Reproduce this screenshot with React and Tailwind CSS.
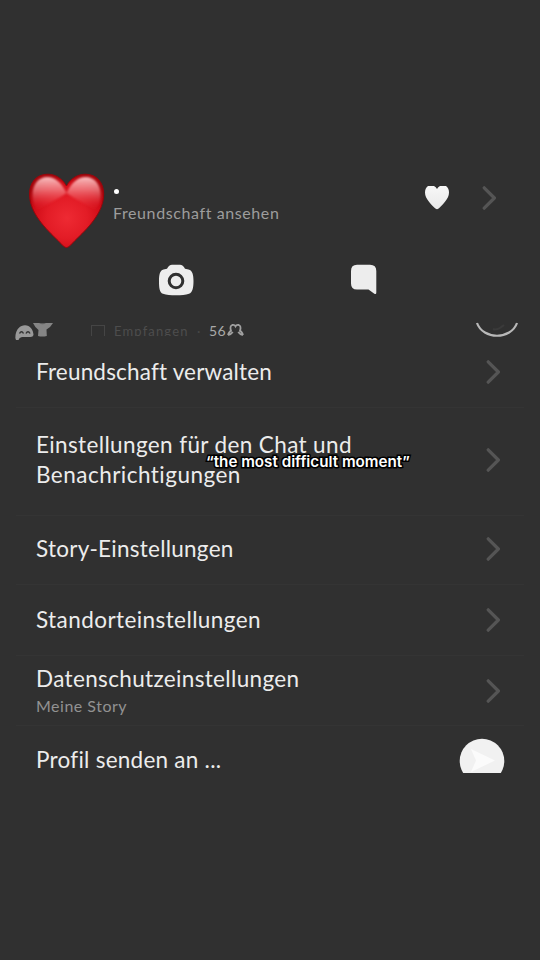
import React from 'react';

function Chevron({ className = '' }) {
  return (
    <svg className={`shrink-0 ${className}`} width="16" height="24" viewBox="0 0 16 24" fill="none" stroke="#555" strokeWidth="3.2">
      <path d="M2.2 1.8 L12.4 12 L2.2 22.2" strokeLinejoin="round" strokeLinecap="round" />
    </svg>
  );
}

function RedHeart() {
  return (
    <svg className="shrink-0" width="80" height="78" viewBox="0 0 80 78">
      <defs>
        <radialGradient id="body" cx="40" cy="46" r="45" gradientUnits="userSpaceOnUse">
          <stop offset="0" stopColor="#ee2a33" />
          <stop offset="0.45" stopColor="#e31c26" />
          <stop offset="0.78" stopColor="#cf0b16" />
          <stop offset="1" stopColor="#a6040b" />
        </radialGradient>
        <linearGradient id="gloss" x1="0" y1="5" x2="0" y2="38" gradientUnits="userSpaceOnUse">
          <stop offset="0" stopColor="#ffc9ca" stopOpacity="0.95" />
          <stop offset="0.4" stopColor="#f5878b" stopOpacity="0.75" />
          <stop offset="1" stopColor="#ec2c35" stopOpacity="0" />
        </linearGradient>
        <filter id="soft" x="-10%" y="-10%" width="120%" height="120%">
          <feGaussianBlur stdDeviation="0.9" />
        </filter>
      </defs>
      <path
        d="M39.5 14 C35 6 28 2.2 20.5 2.2 C9.500 2.200 2.500 10.500 2.500 22 C2.500 41 19 57 31 68.500 C34 71.500 37 75.500 39.500 75.500 C42 75.500 45 71.500 48 68.500 C60 57 76.700 41 76.700 22 C76.700 10.500 69.500 2.200 58.500 2.200 C51 2.200 44 6 39.500 14 Z"
        fill="url(#body)"
        stroke="#98060b"
        strokeWidth="1"
      />
      <g fill="url(#gloss)" filter="url(#soft)">
        <path d="M39.500 21 C34 10 28 5 20.500 5 C11 5 5.500 13 5.500 23 C5.500 29 7.500 35 11 39 C20 31 30 28 39.500 21 Z" />
        <path d="M39.500 21 C45 10 51 5 58.500 5 C68 5 73.700 13 73.700 23 C73.700 29 71.500 35 68 39 C59 31 49 28 39.500 21 Z" />
      </g>
    </svg>
  );
}

function WhiteHeart() {
  return (
    <svg className="shrink-0" width="26" height="26" viewBox="0 0 26 26">
      <defs>
        <linearGradient id="wh" x1="0" y1="0" x2="0" y2="1">
          <stop offset="0" stopColor="#f7f7f7" />
          <stop offset="1" stopColor="#e9e9e9" />
        </linearGradient>
      </defs>
      <path d="M4 1 H10 Q12 1.800 13 4 Q14 1.800 16 1 H22 Q25 3 25 7.500 C25 14 18.500 19.500 15.500 22.800 Q13 25.500 10.500 22.800 C7.500 19.500 1 14 1 7.500 Q1 3 4 1 Z" fill="url(#wh)" />
    </svg>
  );
}

function Header() {
  return (
    <header className="flex h-[84px] items-start pl-[27px]">
      <div className="pt-[4px]"><RedHeart /></div>
      <div className="ml-[6px] mt-[21px] w-[311px]">
        <div className="flex h-[12px] items-start pl-[1px]">
          <span className="size-[5px] rounded-full bg-white" />
        </div>
        <div className="whitespace-nowrap text-[16px] leading-[24px] tracking-[0.6px] text-[#9d9d9d]">Freundschaft ansehen</div>
      </div>
      <div className="mt-[17px]"><WhiteHeart /></div>
      <Chevron className="ml-[32px] mt-[18px]" />
    </header>
  );
}

function Actions() {
  return (
    <div className="flex h-[70px] items-start pl-[158px] pt-[12px]">
      <svg width="36" height="32" viewBox="0 0 36 32">
        <path d="M9 4.800 Q11 1 14 .8 H22 Q25 1 27 4.800 L30.500 5.600 C34.500 6.500 35.500 11 35.500 17 C35.500 24 34.500 28.500 31 29.800 Q26 31.300 18 31.300 Q10 31.300 5 29.800 C1.500 28.500 1 24 1 17 C1 11 1.800 6.500 5.500 5.600 Z" fill="#ededed" />
        <circle cx="18" cy="17" r="6.800" fill="#ededed" stroke="#303030" strokeWidth="3" />
      </svg>
      <svg className="ml-[156px]" width="28" height="32" viewBox="0 0 28 32">
        <path d="M7 .8 H20 Q26.300 .8 26.300 7 V28.500 Q26.300 31 24 29.500 L18.500 25.500 H7 Q1 25.500 1 19.500 V7 Q1 .8 7 .8 Z" fill="#ededed" />
      </svg>
    </div>
  );
}

function ChatPeek() {
  return (
    <div className="flex h-[18px] items-start overflow-hidden">
      <svg className="ml-[14px] shrink-0" width="42" height="18" viewBox="0 0 42 18">
        <path d="M2 18 Q1 15.500 1.500 13 C2.500 7 6 3.200 11 3.200 C16 3.200 19.500 8 19.500 13 Q19 15 16.500 15 H8 Q5 15.500 4.500 18 Z" fill="#999" />
        <path d="M5.500 11.500 q2 -3.500 4 0 M12 11.500 q2 -3.500 4 0" fill="none" stroke="#333" strokeWidth="1.500" />
        <path d="M19 1 H39 Q36.500 5.500 32.500 7.500 L32.800 14 Q28 15 24 14 L24.500 8 Q21 5.500 19 1 Z" fill="#858585" />
        <path d="M25 1 Q28.500 3.500 32 1" fill="#606060" />
      </svg>
      <div className="flex h-[14px] w-[418px] shrink-0 overflow-hidden">
        <span className="ml-[35px] mt-[3px] h-[16px] w-[14px] shrink-0 border border-[#454545]" />
        <span className="ml-[9px] w-[83px] whitespace-nowrap text-[13px] leading-[18px] tracking-[1.15px] text-[#4d4d4d]">Empfangen</span>
        <span className="w-[12px] text-[13px] leading-[18px] text-[#464646]">·</span>
        <span className="w-[18px] text-[14px] leading-[18px] tracking-[0.3px] text-[#a9a9a9]">56</span>
        <svg className="shrink-0" width="17" height="14" viewBox="0 0 17 14" fill="none" stroke="#a0a0a0" strokeWidth="1.800">
          <path d="M1 13 Q2 9.500 4 8.800 Q2.500 4 5.200 3 Q7.500 2.500 8.500 4.300 Q9.500 2.500 11.800 3 Q14.500 4 13 8.800 Q15 9.500 16 13 M1 13 Q4 12.500 5.800 10 M16 13 Q13 12.500 11.200 10" />
        </svg>
      </div>
      <svg className="shrink-0" width="48" height="18" viewBox="0 0 48 18" fill="none">
        <path d="M3 1 C9 18 37 18 43 1" stroke="#b8b8b8" strokeWidth="2.200" />
        <path d="M19 7 Q23 9 30 3" stroke="#3a3a3a" strokeWidth="2" />
      </svg>
    </div>
  );
}

function Row({ className, children }) {
  return (
    <div className={`mx-[16px] flex items-center justify-between border-b border-[#343434] pl-[20px] pr-[22px] ${className}`}>
      <div className="whitespace-nowrap text-[22.500px] leading-[30px] text-[#ececec]">{children}</div>
      <Chevron />
    </div>
  );
}

export default function App() {
  return (
    <main className="relative h-[960px] w-[540px] overflow-hidden bg-[#303030] pt-[168px] font-['Lato','Noto_Sans',sans-serif]">
      <Header />
      <Actions />
      <ChatPeek />
      <section>
        <Row className="h-[68px] pb-[4px]"><span className="tracking-[0.18px]">Freundschaft verwalten</span></Row>
        <Row className="h-[108px] pb-[3px]">
          <div className="tracking-[0.37px]">Einstellungen für den Chat und</div>
          <div className="tracking-[0.48px]">Benachrichtigungen</div>
        </Row>
        <Row className="h-[69px] pb-[2px]"><span className="tracking-[0.25px]">Story-Einstellungen</span></Row>
        <Row className="h-[71px]"><span className="tracking-[0.42px]">Standorteinstellungen</span></Row>
        <Row className="h-[70px]">
          <div className="tracking-[0.35px]">Datenschutzeinstellungen</div>
          <div className="text-[16px] leading-[23px] tracking-[0.5px] text-[#929292]">Meine Story</div>
        </Row>
        <div className="flex h-[47px] items-start justify-between overflow-hidden pl-[36px] pr-[35px] pt-[12px]">
          <span className="whitespace-nowrap pt-[7px] text-[22.500px] leading-[30px] tracking-[0.25px] text-[#ececec]">Profil senden an ...</span>
          <svg className="shrink-0" width="46" height="46" viewBox="0 0 46 46">
            <circle cx="23" cy="23" r="22.300" fill="#f1f1f1" />
            <path d="M12 11 L36 22.500 L12 34 L17 22.500 Z" fill="#fbfbfb" />
          </svg>
        </div>
      </section>
      <div className="absolute left-[206px] top-[451px] whitespace-nowrap font-['Inter',sans-serif] text-[15.200px] font-semibold leading-[21px] text-white [-webkit-text-stroke:3px_black] [paint-order:stroke_fill] [stroke-linejoin:round]">“the most difficult moment”</div>
    </main>
  );
}
